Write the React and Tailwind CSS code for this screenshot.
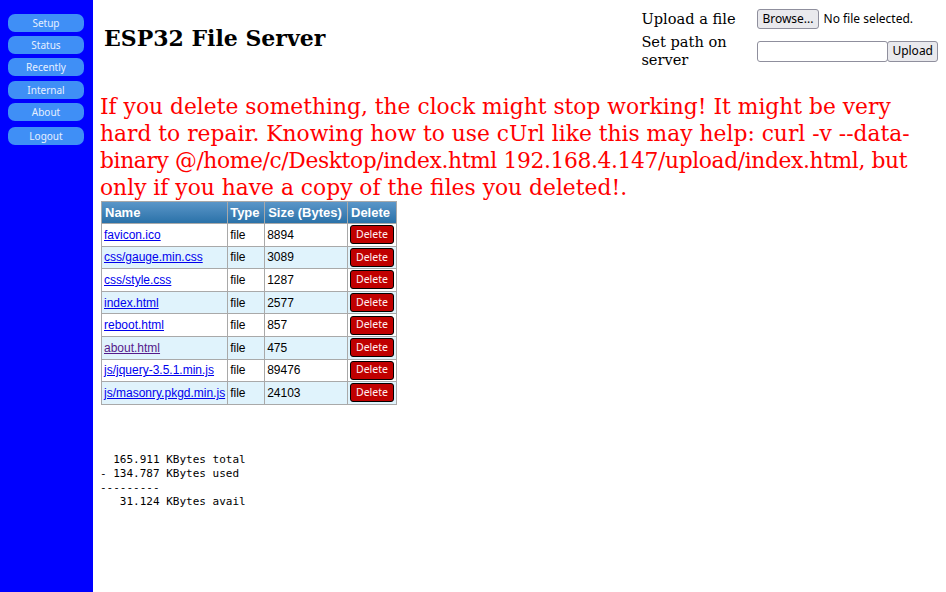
import React from "react";

const navItems = ["Setup", "Status", "Recently", "Internal", "About", "Logout"];

const files = [
  { name: "favicon.ico", size: "8894" },
  { name: "css/gauge.min.css", size: "3089" },
  { name: "css/style.css", size: "1287" },
  { name: "index.html", size: "2577" },
  { name: "reboot.html", size: "857" },
  { name: "about.html", size: "475", visited: true },
  { name: "js/jquery-3.5.1.min.js", size: "89476" },
  { name: "js/masonry.pkgd.min.js", size: "24103" },
];

export default function App() {
  return (
    <div className="flex min-h-[592px] w-[946px] bg-white text-black">
      <nav className="flex w-[93px] shrink-0 flex-col gap-[4px] bg-[#0000ff] px-[8px] pt-[14px]">
        {navItems.map((n, i) => (
          <div
            key={n}
            className={`flex h-[18px] w-[76px] items-center justify-center rounded-[7px] bg-[#3f8ff6] text-[10px] text-[#e6efff] ${i === 3 ? "mt-[1px]" : ""} ${i === 5 ? "mt-[2px]" : ""}`}
            style={{ fontFamily: '"Noto Sans", sans-serif' }}
          >
            {n}
          </div>
        ))}
      </nav>
      <main className="flex min-w-0 flex-1 flex-col pl-[7px] pr-[4px]">
        <div className="flex items-start justify-between pr-[4px]">
          <h1
            className="mt-[25px] pl-[4px] text-[22px] font-bold leading-[26px]"
            style={{ fontFamily: '"DejaVu Serif", serif' }}
          >
            ESP32 File Server
          </h1>
          <div
            className="mt-[9px] grid grid-cols-[116px_auto] items-center gap-y-[4px]"
            style={{ fontFamily: '"DejaVu Serif", serif' }}
          >
            <div className="text-[14.6px] leading-[18px]">Upload a file</div>
            <div className="flex items-center gap-[5px]" style={{ fontFamily: '"Noto Sans", sans-serif' }}>
              <div className="flex h-[20px] items-center rounded-[3px] border border-[#8f8f9d] bg-[#e9e9ed] px-[4px] text-[12px] text-black">
                Browse...
              </div>
              <span className="text-[12px]">No file selected.</span>
            </div>
            <div className="w-[100px] text-[14.6px] leading-[18px]">Set path on server</div>
            <div className="flex items-center" style={{ fontFamily: '"Noto Sans", sans-serif' }}>
              <div className="h-[21px] w-[131px] rounded-[3px] border border-[#8f8f9d] bg-white" />
              <div className="-ml-[1px] flex h-[21px] items-center rounded-[3px] border border-[#8f8f9d] bg-[#e9e9ed] px-[4px] text-[12px]">
                Upload
              </div>
            </div>
          </div>
        </div>
        <p
          className="mt-[24px] whitespace-nowrap text-[21.8px] leading-[27px] text-[#ff0000]"
          style={{ fontFamily: '"DejaVu Serif", serif' }}
        >
          If you delete something, the clock might stop working! It might be very
          <br />
          hard to repair. Knowing how to use cUrl like this may help: curl -v --data-
          <br />
          <span className="tracking-[-0.38px]">
            binary @/home/c/Desktop/index.html 192.168.4.147/upload/index.html, but
          </span>
          <br />
          only if you have a copy of the files you deleted!.
        </p>
        <table
          className="ml-[1px] w-[296px] border-collapse border border-[#a9a9a9] text-[12px]"
          style={{ fontFamily: '"Liberation Sans", Arial, sans-serif' }}
        >
          <thead>
            <tr className="h-[22px] bg-gradient-to-b from-[#5a96c8] to-[#2770a7] text-left text-[13px] font-bold text-white">
              <th className="w-[126px] border border-[#a9a9a9] px-[3px]">Name</th>
              <th className="w-[37px] border border-[#a9a9a9] px-[2px]">Type</th>
              <th className="w-[83px] border border-[#a9a9a9] px-[3px]">Size (Bytes)</th>
              <th className="border border-[#a9a9a9] px-[3px]">Delete</th>
            </tr>
          </thead>
          <tbody>
            {files.map((f, i) => (
              <tr key={f.name} className={`h-[22.6px] ${i % 2 === 1 ? "bg-[#e0f3fc]" : "bg-white"}`}>
                <td className="border border-[#a9a9a9] px-[2px]">
                  <a className={`underline ${f.visited ? "text-[#551a8b]" : "text-[#0000ee]"}`}>{f.name}</a>
                </td>
                <td className="border border-[#a9a9a9] px-[2px]">file</td>
                <td className="border border-[#a9a9a9] px-[2px]">{f.size}</td>
                <td className="border border-[#a9a9a9] px-[2px] py-0">
                  <div
                    className="flex h-[19px] w-[44px] items-center justify-center rounded-[3px] border border-black bg-[#c00000] text-[10.5px] text-[#fff0f0]"
                    style={{ fontFamily: '"Noto Sans", sans-serif' }}
                  >
                    Delete
                  </div>
                </td>
              </tr>
            ))}
          </tbody>
        </table>
        <pre
          className="mt-[34px] text-[11px] leading-[14px]"
          style={{ fontFamily: '"DejaVu Sans Mono", monospace' }}
        >
{`
  165.911 KBytes total
- 134.787 KBytes used
---------
   31.124 KBytes avail`}
        </pre>
      </main>
    </div>
  );
}
